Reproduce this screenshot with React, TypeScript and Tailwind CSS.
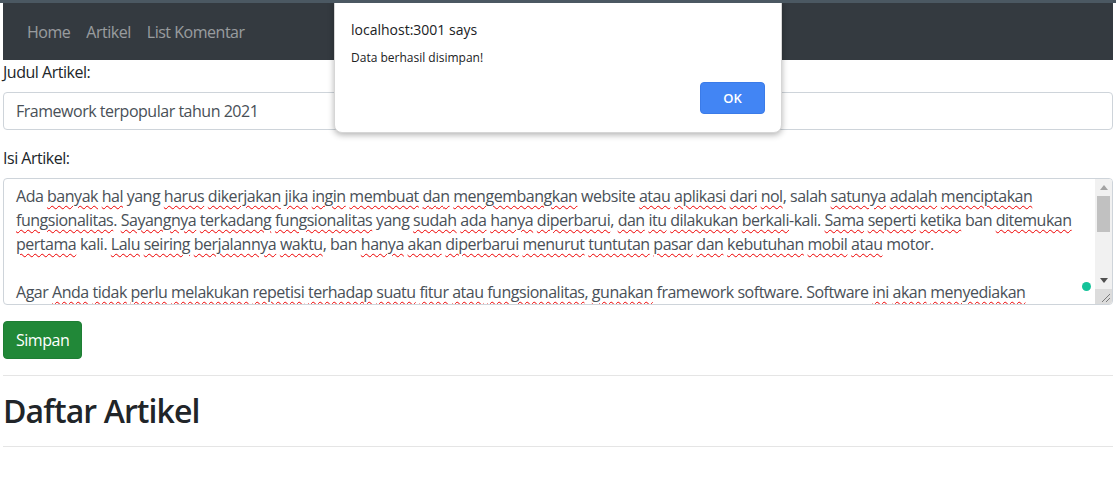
import React from 'react';

type Word = [string, boolean];

// baris isi artikel, true = kata yang ditandai spellcheck
const LINES: Word[][] = [
  [['Ada', false], ['banyak', true], ['hal', true], ['yang', false], ['harus', true], ['dikerjakan', true], ['jika', true], ['ingin', true], ['membuat', true], ['dan', true], ['mengembangkan', true], ['website', false], ['atau', true], ['aplikasi', true], ['dari', true], ['nol', true], [',', false], ['salah', false], ['satunya', true], ['adalah', true], ['menciptakan', true]],
  [['fungsionalitas', true], ['.', false], ['Sayangnya', true], ['terkadang', true], ['fungsionalitas', true], ['yang', false], ['sudah', true], ['ada', true], ['hanya', true], ['diperbarui', true], [',', false], ['dan', true], ['itu', true], ['dilakukan', true], ['berkali', true], ['-kali.', false], ['Sama', true], ['seperti', true], ['ketika', true], ['ban', false], ['ditemukan', true]],
  [['pertama', true], ['kali.', false], ['Lalu', true], ['seiring', true], ['berjalannya', true], ['waktu', true], [',', false], ['ban', false], ['hanya', true], ['akan', true], ['diperbarui', true], ['menurut', true], ['tuntutan', true], ['pasar', true], ['dan', true], ['kebutuhan', true], ['mobil', true], ['atau', true], ['motor.', false]],
  [],
  [['Agar', false], ['Anda', true], ['tidak', true], ['perlu', true], ['melakukan', true], ['repetisi', true], ['terhadap', true], ['suatu', true], ['fitur', true], ['atau', true], ['fungsionalitas', true], [',', false], ['gunakan', true], ['framework', false], ['software.', false], ['Software', false], ['ini', true], ['akan', true], ['menyediakan', true]],
];

const noSpaceBefore = (w: string) => w === ',' || w === '.' || w.startsWith('-');

function Line({ words }: { words: Word[] }) {
  if (words.length === 0) return <div className="h-6">&nbsp;</div>;
  return (
    <div className="h-6 whitespace-nowrap">
      {words.map(([w, marked], i) => (
        <React.Fragment key={i}>
          {i > 0 && !noSpaceBefore(w) ? ' ' : ''}
          <span className={marked ? 'underline decoration-wavy decoration-[#e00] decoration-1 underline-offset-[3px]' : ''}>{w}</span>
        </React.Fragment>
      ))}
    </div>
  );
}

function Scrollbar() {
  return (
    <div className="flex flex-col w-[17px] bg-[#f1f1f1] h-full">
      <div className="h-[17px] flex items-center justify-center">
        <svg width="8" height="5" viewBox="0 0 8 5"><path d="M0 5 L4 0 L8 5 Z" fill="#a3a3a3" /></svg>
      </div>
      <div className="mx-[2px] h-[36px] bg-[#c1c1c1]" />
      <div className="flex-1" />
      <div className="h-[17px] flex items-center justify-center">
        <svg width="8" height="5" viewBox="0 0 8 5"><path d="M0 0 L4 5 L8 0 Z" fill="#505050" /></svg>
      </div>
      <div className="h-[15px] bg-[#dcdcdc] flex items-end justify-end pr-[2px] pb-[2px]">
        <svg width="9" height="9" viewBox="0 0 9 9">
          <path d="M1 9 L9 1 M5 9 L9 5" stroke="#7a7a7a" strokeWidth="1" />
        </svg>
      </div>
    </div>
  );
}

export default function App() {
  return (
    <div className="relative min-h-[491px] bg-white text-[#212529] text-base leading-6 tracking-[-0.48px] font-['Segoe_UI','Open_Sans',sans-serif] border-t-[3px] border-[#4b5862] overflow-hidden">
      <div className="px-[3px]">
        {/* Navbar */}
        <nav className="bg-[#343a40] h-[57px] px-4 py-2 flex items-center">
          <ul className="flex">
            {['Home', 'Artikel', 'List Komentar'].map((item) => (
              <li key={item} className="px-2 py-2 text-[rgba(255,255,255,0.5)]">{item}</li>
            ))}
          </ul>
        </nav>

        {/* Form */}
        <div className="mb-4">
          <label className="block mb-2">Judul Artikel:</label>
          <div className="h-[38px] border border-[#ced4da] rounded px-3 flex items-center text-[#495057]">
            Framework terpopular tahun 2021
          </div>
        </div>
        <div className="mb-4">
          <label className="block mb-2">Isi Artikel:</label>
          <div className="h-[127px] border border-[#ced4da] rounded flex overflow-hidden">
            <div className="flex-1 px-3 py-[5px] text-[#495057] overflow-hidden relative">
              {LINES.map((words, i) => (
                <Line key={i} words={words} />
              ))}
              <span className="absolute right-[4px] bottom-[13px] w-[9px] h-[9px] rounded-full bg-[#15c39a]" />
            </div>
            <Scrollbar />
          </div>
        </div>
        <button className="h-[38px] px-3 bg-[#218838] text-white rounded border border-[#1e7e34]">Simpan</button>

        <hr className="my-4 border-t border-[rgba(0,0,0,0.1)]" />
        <h2 className="text-[32px] leading-[1.2] font-semibold tracking-[-0.9px] mb-2">Daftar Artikel</h2>
        <hr className="my-4 border-t border-[rgba(0,0,0,0.1)]" />
      </div>

      {/* Browser alert */}
      <div className="absolute left-[334px] top-[-3px] w-[448px] h-[133px] bg-white rounded-b-[8px] border border-[#d6d6d6] shadow-[0_2px_6px_rgba(0,0,0,0.3)] px-4 pt-[19px] tracking-normal">
        <div className="text-[14px] leading-5 text-[#202124]">localhost:3001 says</div>
        <div className="mt-[8px] text-[12px] leading-5 text-[#202124]">Data berhasil disimpan!</div>
        <div className="flex justify-end mt-[14px]">
          <button className="w-[65px] h-[32px] rounded-[4px] bg-[#4285f4] text-white text-[13px] font-semibold border border-[#3b7be8]">OK</button>
        </div>
      </div>
    </div>
  );
}
